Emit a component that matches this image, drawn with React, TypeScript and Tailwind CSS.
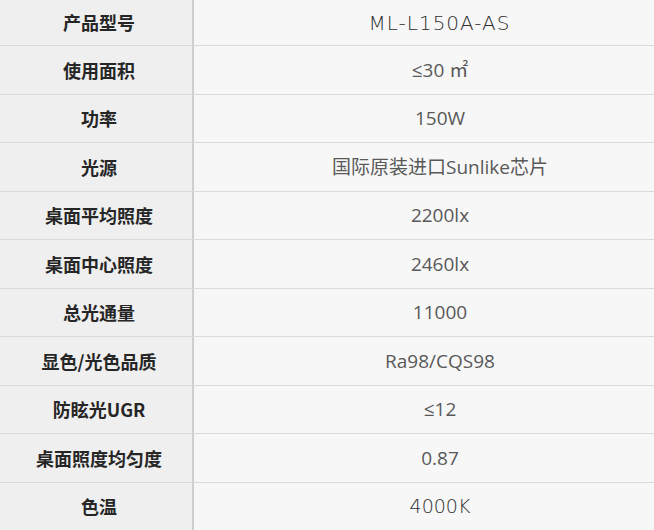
const rows: [string, string, number, string][] = [
  ["产品型号", "ML-L150A-AS", 46, "font-['DejaVu_Sans',sans-serif] font-extralight text-[20px] tracking-[1px] pl-[31px] text-[#2e2e2e]"],
  ["使用面积", "≤30 ㎡", 49, ""],
  ["功率", "150W", 48, ""],
  ["光源", "国际原装进口Sunlike芯片", 49, ""],
  ["桌面平均照度", "2200lx", 48, ""],
  ["桌面中心照度", "2460lx", 49, ""],
  ["总光通量", "11000", 48, ""],
  ["显色/光色品质", "Ra98/CQS98", 49, ""],
  ["防眩光UGR", "≤12", 48, ""],
  ["桌面照度均匀度", "0.87", 49, ""],
  ["色温", "4000K", 47, "font-['DejaVu_Sans',sans-serif] font-extralight text-[19px] pl-[32px] text-[#2e2e2e]"],
];

const base = "font-['Open_Sans','Noto_Sans_CJK_SC',sans-serif] text-[19px] pl-[32px] text-[#595959]";

export default function App() {
  return (
    <div className="w-[654px] h-[530px] overflow-hidden bg-[#f7f7f7]">
      {rows.map(([label, value, h, extra], i) => (
        <div
          key={label}
          className={`flex ${i < rows.length - 1 ? "border-b border-[#dadada]" : ""}`}
          style={{ height: h }}
        >
          <div className="w-[194px] shrink-0 bg-[#efefef] border-r-2 border-[#cfcfcf] flex items-center justify-center pl-[6px] font-bold text-[18px] text-[#262626] font-['Noto_Sans_CJK_SC',sans-serif]">
            {label}
          </div>
          <div className={`flex-1 flex items-center justify-center ${extra || base}`}>
            {value}
          </div>
        </div>
      ))}
    </div>
  );
}
